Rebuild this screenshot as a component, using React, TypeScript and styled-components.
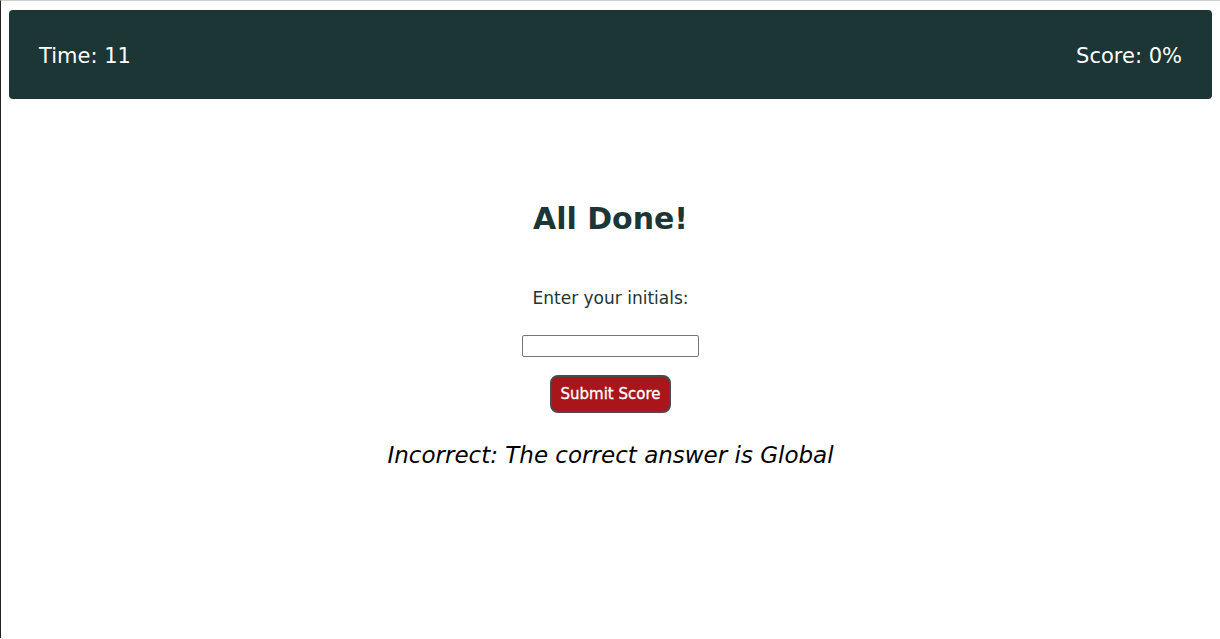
import React from "react";
import styled, { createGlobalStyle } from "styled-components";

const Global = createGlobalStyle`
  html, body { margin: 0; padding: 0; background: #fff; }
  body {
    font-family: "DejaVu Sans", Verdana, sans-serif;
    border-top: 1px solid #cfcfcf;
    border-left: 1px solid #222;
    min-height: 638px;
    box-sizing: border-box;
  }
`;

const Page = styled.div`
  padding: 9px 8px 0 8px;
`;

const Header = styled.header`
  display: flex;
  justify-content: space-between;
  align-items: center;
  height: 89px;
  box-sizing: border-box;
  padding: 4px 30px 0;
  background: #1c3535;
  border-radius: 4px;
  color: #fff;
  font-size: 21px;
`;

const Stat = styled.span`
  line-height: 1;
`;

const Main = styled.main`
  display: flex;
  flex-direction: column;
  align-items: center;
  padding-top: 100px;
  color: #1c3535;
`;

const Title = styled.h1`
  margin: 0;
  font-size: 30px;
  font-weight: bold;
  line-height: 40px;
`;

const Label = styled.label`
  margin-top: 49px;
  font-size: 17px;
  line-height: 20px;
`;

const Input = styled.input`
  margin-top: 27px;
  width: 177px;
  height: 22px;
  box-sizing: border-box;
  border: 1px solid #767676;
  border-radius: 2px;
  padding: 0 4px;
`;

const Button = styled.button`
  margin-top: 18px;
  width: 121px;
  height: 38px;
  box-sizing: border-box;
  background: #a8161b;
  color: #fff;
  border: 2px solid #4a4a4a;
  border-radius: 8px;
  font-family: "DejaVu Sans", Verdana, sans-serif;
  font-size: 15px;
  font-weight: 500;
  -webkit-text-stroke: 0.3px #fff;
`;

const Feedback = styled.p`
  margin: 27px 0 0;
  font-size: 23px;
  font-style: italic;
  color: #000;
  line-height: 30px;
`;

export default function App() {
  return (
    <>
      <Global />
      <Page>
        <Header>
          <Stat>Time: 11</Stat>
          <Stat>Score: 0%</Stat>
        </Header>
        <Main>
          <Title>All Done!</Title>
          <Label htmlFor="initials">Enter your initials:</Label>
          <Input id="initials" type="text" />
          <Button>Submit Score</Button>
          <Feedback>Incorrect: The correct answer is Global</Feedback>
        </Main>
      </Page>
    </>
  );
}
